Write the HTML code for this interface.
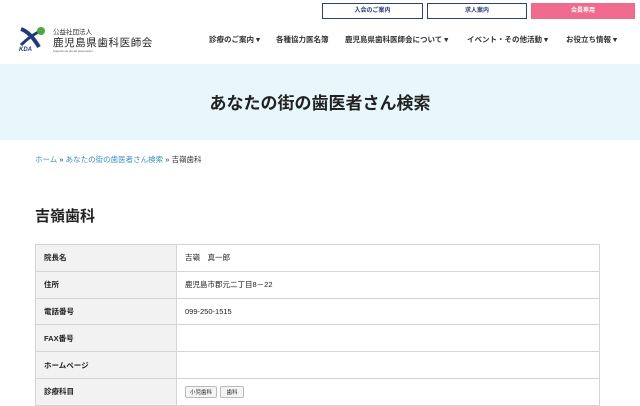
<!DOCTYPE html>
<html><head><meta charset="utf-8"><style>
*{margin:0;padding:0;box-sizing:border-box}
body{width:640px;height:400px;overflow:hidden;background:#fff;font-family:"Liberation Sans","Noto Sans CJK JP",sans-serif;color:#222;position:relative}
.btn{position:absolute;top:3px;height:16px;font-size:6px;text-align:center;line-height:14px;border:1px solid #2b3f7a;color:#2b3f7a;font-weight:bold}
.nav{position:absolute;top:34px;font-size:7.5px;font-weight:bold;color:#333;white-space:nowrap}
.banner{position:absolute;top:64px;left:0;width:640px;height:76px;background:#e8f7fc;text-align:center;font-size:17px;font-weight:bold;line-height:80px;color:#222}
.bc{position:absolute;top:154px;left:35px;font-size:7.5px;color:#333}
.bc a{color:#3a8fd0;text-decoration:none}
h1{position:absolute;top:205px;left:35px;font-size:15px;font-weight:bold}
table{position:absolute;top:244px;left:35px;width:565px;border-collapse:collapse;font-size:7.5px}
td{border:1px solid #d4d4d4;height:26.8px;padding:0 8px}
td.h{background:#f2f2f2;width:141px;font-weight:bold}
.tag{display:inline-block;border:1px solid #bbb;background:#f4f4f4;font-size:5.5px;padding:1px 4px;margin-right:3px;border-radius:2px}
</style></head><body>
<div class="btn" style="left:322px;width:101px">入会のご案内</div>
<div class="btn" style="left:427px;width:100px">求人案内</div>
<div class="btn" style="left:531px;width:104px;background:#ef6a8c;border-color:#ef6a8c;color:#fff">会員専用</div>
<svg style="position:absolute;left:17px;top:25px" width="30" height="27" viewBox="0 0 30 27">
<path d="M4 4 C10 6 16 12 22 22" stroke="#1f3a7a" stroke-width="4" fill="none"/>
<path d="M26 5 C18 8 10 14 4 20" stroke="#1f3a7a" stroke-width="3" fill="none"/>
<circle cx="24" cy="6" r="4" fill="#4aaa3c"/>
<text x="2" y="26" font-size="6" font-weight="bold" font-style="italic" fill="#1f3a7a" font-family="Liberation Sans">KDA</text>
</svg>
<div style="position:absolute;left:53px;top:26px;font-size:6.5px;color:#333">公益社団法人</div>
<div style="position:absolute;left:53px;top:35px;font-size:10.5px;color:#222;letter-spacing:0.6px">鹿児島県歯科医師会</div>
<div style="position:absolute;left:53px;top:49px;font-size:3px;color:#666">Kagoshima dental association</div>
<div class="nav" style="left:209px">診療のご案内 ▾</div>
<div class="nav" style="left:276px">各種協力医名簿</div>
<div class="nav" style="left:345px">鹿児島県歯科医師会について ▾</div>
<div class="nav" style="left:467px">イベント・その他活動 ▾</div>
<div class="nav" style="left:566px">お役立ち情報 ▾</div>
<div class="banner">あなたの街の歯医者さん検索</div>
<div class="bc"><a>ホーム</a> » <a>あなたの街の歯医者さん検索</a> » 吉嶺歯科</div>
<h1>吉嶺歯科</h1>
<table>
<tr><td class="h">院長名</td><td>吉嶺　真一郎</td></tr>
<tr><td class="h">住所</td><td>鹿児島市郡元二丁目8－22</td></tr>
<tr><td class="h">電話番号</td><td>099-250-1515</td></tr>
<tr><td class="h">FAX番号</td><td></td></tr>
<tr><td class="h">ホームページ</td><td></td></tr>
<tr><td class="h">診療科目</td><td><span class="tag">小児歯科</span><span class="tag">&nbsp;歯科&nbsp;</span></td></tr>
</table>
</body></html>
